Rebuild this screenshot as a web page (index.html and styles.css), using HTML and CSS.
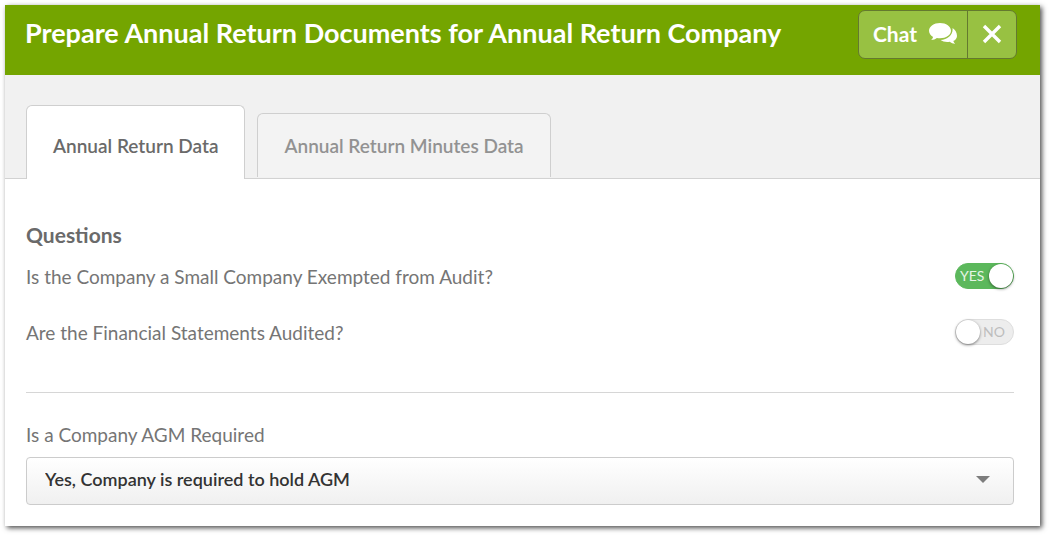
FILE: index.html
```html
<!DOCTYPE html>
<html lang="en">

<head>
    <meta charset="UTF-8">
    <meta name="viewport" content="width=device-width, initial-scale=1.0">
    <title>Prepare Annual Return Documents</title>
    <link rel="stylesheet" href="styles.css">
</head>

<body>
    <main class="panel">
        <header class="panel-header">
            <h1>Prepare Annual Return Documents for Annual Return Company</h1>
            <div class="actions">
                <button type="button" class="action chat">
                    Chat
                    <svg width="28" height="24" viewBox="0 0 28 24" fill="#fff" aria-hidden="true">
                        <path
                            d="M11 1C5 1 0 4.400 0 8.800c0 2.500 1.600 4.700 4.100 6.100-.4 1.300-1.100 2.200-1.900 3.100 2.300-.2 4.200-1 5.700-2.100 1 .2 2 .3 3.100.3 6.100 0 11-3.300 11-7.500S17.100 1 11 1z" />
                        <path
                            d="M23.500 6c.1.500.1 1 .1 1.600 0 5.700-5.300 10.200-12 10.500 1.700 1.200 4 1.900 6.600 1.900.9 0 1.700-.1 2.500-.2 1.500 1.200 3.300 1.900 5.400 2.100-.8-.8-1.400-1.600-1.800-2.800 2.200-1.200 3.700-3 3.700-5.200 0-3.300-1.800-6.300-4.500-7.900z" />
                    </svg>
                </button>
                <button type="button" class="action close" aria-label="Close">
                    <svg width="20" height="20" viewBox="0 0 20 20" fill="none" stroke="#fff" stroke-width="3.400" aria-hidden="true">
                        <path d="M2 2 L18 18 M18 2 L2 18" />
                    </svg>
                </button>
            </div>
        </header>

        <nav class="tabs" role="tablist">
            <button type="button" class="tab active" role="tab" aria-selected="true">Annual Return Data</button>
            <button type="button" class="tab" role="tab" aria-selected="false">Annual Return Minutes Data</button>
        </nav>

        <form class="content">
            <section class="questions">
                <h2>Questions</h2>
                <div class="question">
                    <label for="small-company">Is the Company a Small Company Exempted from Audit?</label>
                    <div class="switch">
                        <input type="checkbox" id="small-company" checked>
                        <span class="on">YES</span>
                        <span class="off">NO</span>
                    </div>
                </div>
                <div class="question">
                    <label for="audited">Are the Financial Statements Audited?</label>
                    <div class="switch">
                        <input type="checkbox" id="audited">
                        <span class="on">YES</span>
                        <span class="off">NO</span>
                    </div>
                </div>
            </section>

            <section class="agm">
                <label for="agm">Is a Company AGM Required</label>
                <div class="select">
                    <select id="agm">
                        <option>Yes, Company is required to hold AGM</option>
                    </select>
                    <svg class="arrow" width="14" height="7" viewBox="0 0 14 7" fill="#7d7d7d" aria-hidden="true">
                        <path d="M0 0 H14 L7 7 Z" />
                    </svg>
                </div>
            </section>
        </form>
    </main>
</body>

</html>
```

FILE: styles.css
```css
/* General styling */
* {
    box-sizing: border-box;
    margin: 0;
    padding: 0;
}

body {
    padding: 5px 9px 9px 5px;
    background-color: #fff;
    color: #6a6a6a;
    font-family: Lato, "Open Sans", sans-serif;
    font-size: 19px;
    line-height: 24px;
}

button,
select {
    font: inherit;
    color: inherit;
    cursor: pointer;
}

.panel {
    background-color: #fff;
    box-shadow: 2px 2px 5px rgba(0, 0, 0, 0.7);
}

/* Header */
.panel-header {
    display: flex;
    justify-content: space-between;
    align-items: flex-start;
    min-height: 70px;
    padding: 5px 23px 16px 20px;
    background-color: #74a500;
    color: #fff;
}

h1 {
    padding-top: 7px;
    font-size: 27px;
    font-weight: 700;
    line-height: 32px;
}

.actions {
    display: flex;
    flex-shrink: 0;
    height: 49px;
    border: 1px solid #64792f;
    border-radius: 7px;
    background-color: #98c142;
}

.action {
    display: flex;
    align-items: center;
    gap: 12px;
    padding: 0 10px 2px 14px;
    border: 0;
    background: none;
    color: #fff;
    font-size: 21px;
    font-weight: 700;
}

.close {
    justify-content: center;
    width: 49px;
    padding: 0 0 2px;
    border-left: 1px solid #64792f;
}

/* Tabs */
.tabs {
    display: flex;
    align-items: flex-end;
    gap: 12px;
    padding: 30px 21px 0;
    border-bottom: 1px solid #d2d2d2;
    background-color: #f1f1f1;
}

.tab {
    height: 64px;
    margin-bottom: 1px;
    padding: 0 26px;
    border: 1px solid #cfcfcf;
    border-bottom: 0;
    border-radius: 6px 6px 0 0;
    background-color: #f3f3f3;
    color: #929292;
    font-weight: 600;
}

.tab.active {
    height: 74px;
    margin-bottom: -1px;
    padding-top: 6px;
    background-color: #fff;
    color: #6a6a6a;
}

/* Form */
.content {
    padding: 44px 26px 21px 21px;
}

.questions {
    padding-bottom: 47px;
    border-bottom: 1px solid #d6d6d6;
}

h2 {
    margin-bottom: 16px;
    font-size: 21px;
    line-height: 24px;
}

.question {
    display: flex;
    align-items: center;
    justify-content: space-between;
    min-height: 26px;
}

.question + .question {
    margin-top: 30px;
}

.question label {
    padding-top: 2px;
    color: #757575;
}

.switch {
    position: relative;
    flex-shrink: 0;
    width: 59px;
    height: 26px;
    font-size: 14px;
    line-height: 26px;
}

.switch input {
    display: block;
    width: 100%;
    height: 100%;
    appearance: none;
    border: 1px solid #dedede;
    border-radius: 13px;
    background-color: #ededed;
    cursor: pointer;
}

.switch input::before {
    content: "";
    display: block;
    width: 24px;
    height: 24px;
    border-radius: 50%;
    background-color: #fff;
    box-shadow: 0 1px 3px rgba(0, 0, 0, 0.5);
}

.switch input:checked {
    border-color: #5cb85c;
    background-color: #5cb85c;
}

.switch input:checked::before {
    margin-left: auto;
}

.switch span {
    position: absolute;
    top: 0;
    pointer-events: none;
}

.switch .on {
    left: 5px;
    color: #e6f5e6;
}

.switch .off {
    right: 9px;
    color: #bdbdbd;
}

.switch input:not(:checked) ~ .on,
.switch input:checked ~ .off {
    display: none;
}

.agm {
    padding-top: 30px;
}

.agm label {
    display: block;
    margin-bottom: 10px;
    color: #757575;
}

.select {
    position: relative;
}

.select select {
    display: block;
    width: 100%;
    height: 48px;
    padding: 0 48px 4px 18px;
    appearance: none;
    border: 1px solid #ccc;
    border-radius: 4px;
    background: linear-gradient(#fff, #f0f0f0);
    color: #333;
    font-size: 18px;
    font-weight: 600;
}

.arrow {
    position: absolute;
    top: 19px;
    right: 24px;
    pointer-events: none;
}
```
